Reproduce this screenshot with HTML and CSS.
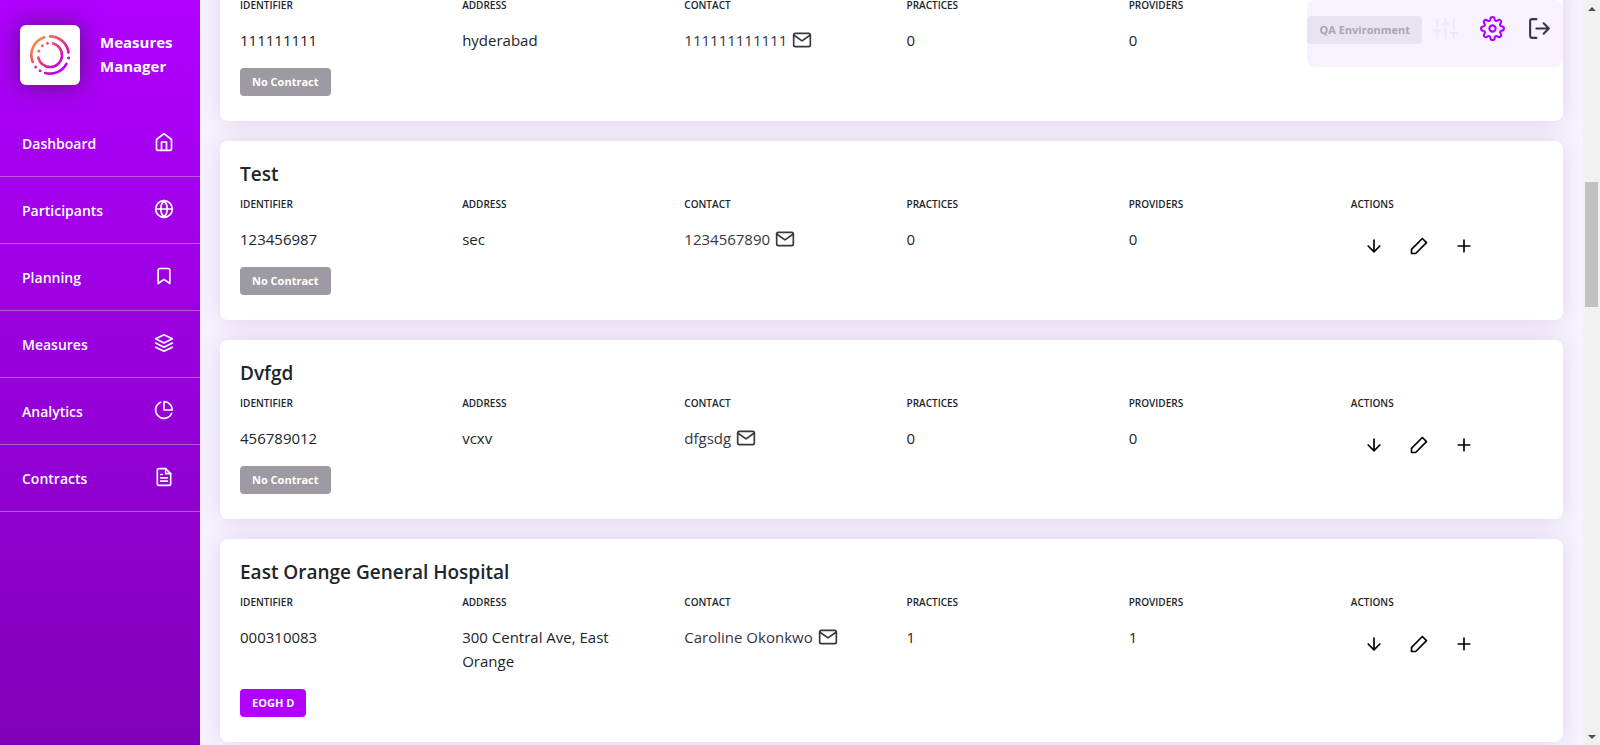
FILE: index.html
```html
<!DOCTYPE html>
<html lang="en">
<head>
<meta charset="utf-8">
<title>Measures Manager</title>
<link rel="stylesheet" href="styles.css">
</head>
<body>
<svg class="sprite" aria-hidden="true">
  <symbol id="mail" viewBox="0 0 24 24"><path d="M4 4h16c1.100 0 2 .9 2 2v12c0 1.100-.9 2-2 2H4c-1.100 0-2-.9-2-2V6c0-1.100.9-2 2-2z"/><path d="M22 6l-10 7L2 6"/></symbol>
  <symbol id="down" viewBox="0 0 24 24"><path d="M12 5v14M19 12l-7 7-7-7"/></symbol>
  <symbol id="edit" viewBox="0 0 24 24"><path d="M16 3l5 5L8 21H3v-5L16 3z"/></symbol>
  <symbol id="plus" viewBox="0 0 24 24"><path d="M12 5v14M5 12h14"/></symbol>
</svg>
<div class="app">
  <aside class="sidebar">
    <div class="brand">
      <span class="logo">
        <svg viewBox="-20 -20 40 40" width="40" height="40" aria-hidden="true">
          <defs><linearGradient id="brandFill" gradientUnits="userSpaceOnUse" x1="-16" y1="-14" x2="12" y2="16"><stop offset="0" stop-color="#f7943a"/><stop offset=".33" stop-color="#ee5468"/><stop offset=".65" stop-color="#d71ba8"/><stop offset="1" stop-color="#b000ff"/></linearGradient></defs>
          <g fill="none" stroke="url(#brandFill)" stroke-width="2.600" stroke-linecap="round">
            <path d="M-5.700-17.700A18.600 18.600 0 0 0-17.300 7"/>
            <path d="M0-18.600A18.600 18.600 0 0 1 18.500-2.500"/>
            <path d="M-4.800 18A18.600 18.600 0 0 0 16.400 8.900"/>
            <path d="M3-11.600A12 12 0 1 1-11.700 2.500"/>
          </g>
          <g fill="url(#brandFill)"><circle cx="18.600" cy="3" r="1.500"/><circle cx="-14.300" cy="12" r="1.500"/><circle cx="-9.900" cy="15.700" r="1.500"/><circle cx="-2.600" cy="-11.700" r="1.500"/><circle cx="-7.700" cy="-9.200" r="1.500"/><circle cx="-11.200" cy="-4" r="1.500"/></g>
        </svg>
      </span>
      <span class="brand-name">Measures Manager</span>
    </div>
    <nav class="nav" aria-label="Main">
      <a href="#dashboard">Dashboard<svg class="icon" viewBox="0 0 24 24"><path d="M3 9l9-7 9 7v11a2 2 0 0 1-2 2H5a2 2 0 0 1-2-2z"/><path d="M9 22V12h6v10"/></svg></a>
      <a href="#participants">Participants<svg class="icon" viewBox="0 0 24 24"><circle cx="12" cy="12" r="10"/><path d="M2 12h20M12 2a15.300 15.300 0 0 1 4 10 15.300 15.300 0 0 1-4 10 15.300 15.300 0 0 1-4-10 15.300 15.300 0 0 1 4-10z"/></svg></a>
      <a href="#planning">Planning<svg class="icon" viewBox="0 0 24 24"><path d="M19 21l-7-5-7 5V5a2 2 0 0 1 2-2h10a2 2 0 0 1 2 2z"/></svg></a>
      <a href="#measures">Measures<svg class="icon" viewBox="0 0 24 24"><path d="M12 2L2 7l10 5 10-5-10-5zM2 17l10 5 10-5M2 12l10 5 10-5"/></svg></a>
      <a href="#analytics">Analytics<svg class="icon" viewBox="0 0 24 24"><path d="M21.210 15.890A10 10 0 1 1 8 2.830"/><path d="M22 12A10 10 0 0 0 12 2v10z"/></svg></a>
      <a href="#contracts">Contracts<svg class="icon" viewBox="0 0 24 24"><path d="M14 2H6a2 2 0 0 0-2 2v16a2 2 0 0 0 2 2h12a2 2 0 0 0 2-2V8z"/><path d="M14 2v6h6M16 13H8M16 17H8M10 9H8"/></svg></a>
    </nav>
  </aside>

  <main class="content">
    <div class="cards">
      <article class="card">
        <div class="fields">
          <dl><dt>Identifier</dt><dd>111111111</dd></dl>
          <dl><dt>Address</dt><dd>hyderabad</dd></dl>
          <dl><dt>Contact</dt><dd class="contact">111111111111 <button type="button" aria-label="Send mail"><svg class="icon"><use href="#mail"/></svg></button></dd></dl>
          <dl><dt>Practices</dt><dd>0</dd></dl>
          <dl><dt>Providers</dt><dd>0</dd></dl>
        </div>
        <span class="tag">No Contract</span>
      </article>

      <article class="card">
        <h2>Test</h2>
        <div class="fields">
          <dl><dt>Identifier</dt><dd>123456987</dd></dl>
          <dl><dt>Address</dt><dd>sec</dd></dl>
          <dl><dt>Contact</dt><dd class="contact">1234567890 <button type="button" aria-label="Send mail"><svg class="icon"><use href="#mail"/></svg></button></dd></dl>
          <dl><dt>Practices</dt><dd>0</dd></dl>
          <dl><dt>Providers</dt><dd>0</dd></dl>
          <dl><dt>Actions</dt><dd class="actions"><button type="button" aria-label="Expand"><svg class="icon"><use href="#down"/></svg></button><button type="button" aria-label="Edit"><svg class="icon"><use href="#edit"/></svg></button><button type="button" aria-label="Add"><svg class="icon"><use href="#plus"/></svg></button></dd></dl>
        </div>
        <span class="tag">No Contract</span>
      </article>

      <article class="card">
        <h2>Dvfgd</h2>
        <div class="fields">
          <dl><dt>Identifier</dt><dd>456789012</dd></dl>
          <dl><dt>Address</dt><dd>vcxv</dd></dl>
          <dl><dt>Contact</dt><dd class="contact">dfgsdg <button type="button" aria-label="Send mail"><svg class="icon"><use href="#mail"/></svg></button></dd></dl>
          <dl><dt>Practices</dt><dd>0</dd></dl>
          <dl><dt>Providers</dt><dd>0</dd></dl>
          <dl><dt>Actions</dt><dd class="actions"><button type="button" aria-label="Expand"><svg class="icon"><use href="#down"/></svg></button><button type="button" aria-label="Edit"><svg class="icon"><use href="#edit"/></svg></button><button type="button" aria-label="Add"><svg class="icon"><use href="#plus"/></svg></button></dd></dl>
        </div>
        <span class="tag">No Contract</span>
      </article>

      <article class="card">
        <h2>East Orange General Hospital</h2>
        <div class="fields">
          <dl><dt>Identifier</dt><dd>000310083</dd></dl>
          <dl><dt>Address</dt><dd>300 Central Ave, East Orange</dd></dl>
          <dl><dt>Contact</dt><dd class="contact">Caroline Okonkwo <button type="button" aria-label="Send mail"><svg class="icon"><use href="#mail"/></svg></button></dd></dl>
          <dl><dt>Practices</dt><dd>1</dd></dl>
          <dl><dt>Providers</dt><dd>1</dd></dl>
          <dl><dt>Actions</dt><dd class="actions"><button type="button" aria-label="Expand"><svg class="icon"><use href="#down"/></svg></button><button type="button" aria-label="Edit"><svg class="icon"><use href="#edit"/></svg></button><button type="button" aria-label="Add"><svg class="icon"><use href="#plus"/></svg></button></dd></dl>
        </div>
        <span class="tag tag-active">EOGH D</span>
      </article>
    </div>

    <div class="toolbar">
      <span class="tag tag-env">QA Environment</span>
      <button type="button" class="filters" aria-label="Filters"><svg class="icon" viewBox="0 0 24 24"><path d="M4 21v-7M4 10V3M12 21v-9M12 8V3M20 21v-5M20 12V3M1 14h6M9 8h6M17 16h6"/></svg></button>
      <button type="button" class="settings" aria-label="Settings"><svg class="icon" viewBox="0 0 24 24"><circle cx="12" cy="12" r="3"/><path d="M19.400 15a1.650 1.650 0 0 0 .33 1.820l.06.06a2 2 0 0 1 0 2.830 2 2 0 0 1-2.830 0l-.06-.06a1.650 1.650 0 0 0-1.820-.33 1.650 1.650 0 0 0-1 1.510V21a2 2 0 0 1-2 2 2 2 0 0 1-2-2v-.09A1.650 1.650 0 0 0 9 19.400a1.650 1.650 0 0 0-1.820.33l-.06.06a2 2 0 0 1-2.830 0 2 2 0 0 1 0-2.830l.06-.06a1.650 1.650 0 0 0 .33-1.820 1.650 1.650 0 0 0-1.510-1H3a2 2 0 0 1-2-2 2 2 0 0 1 2-2h.09A1.650 1.650 0 0 0 4.600 9a1.650 1.650 0 0 0-.33-1.820l-.06-.06a2 2 0 0 1 0-2.830 2 2 0 0 1 2.830 0l.06.06a1.650 1.650 0 0 0 1.820.33H9a1.650 1.650 0 0 0 1-1.510V3a2 2 0 0 1 2-2 2 2 0 0 1 2 2v.09a1.650 1.650 0 0 0 1 1.510 1.650 1.650 0 0 0 1.820-.33l.06-.06a2 2 0 0 1 2.830 0 2 2 0 0 1 0 2.830l-.06.06a1.650 1.650 0 0 0-.33 1.820V9a1.650 1.650 0 0 0 1.510 1H21a2 2 0 0 1 2 2 2 2 0 0 1-2 2h-.09a1.650 1.650 0 0 0-1.510 1z"/></svg></button>
      <button type="button" class="logout" aria-label="Log out"><svg class="icon" viewBox="0 0 24 24"><path d="M9 21H5a2 2 0 0 1-2-2V5a2 2 0 0 1 2-2h4M16 17l5-5-5-5M21 12H9"/></svg></button>
    </div>
  </main>

  <div class="scrollbar" aria-hidden="true">
    <span class="arrow arrow-up"></span>
    <span class="thumb"></span>
    <span class="arrow arrow-down"></span>
  </div>
</div>
</body>
</html>
```

FILE: styles.css
```css
* { box-sizing: border-box; }
body {
  margin: 0;
  background: #f8f2ff;
  color: #212529;
  font: 400 15px/24px "Open Sans", "Noto Sans", sans-serif;
}
button {
  display: inline-flex;
  padding: 0;
  border: 0;
  background: none;
  color: inherit;
  cursor: pointer;
}
.sprite { position: absolute; width: 0; height: 0; }
.icon {
  width: 20px;
  height: 20px;
  flex: none;
  fill: none;
  stroke: currentColor;
  stroke-width: 2;
  stroke-linecap: round;
  stroke-linejoin: round;
}
.app { display: flex; height: 100vh; overflow: hidden; }

/* Sidebar */
.sidebar {
  flex: none;
  width: 200px;
  padding-top: 25px;
  background: linear-gradient(#b000ff, #8000b8);
  color: #fff;
}
.brand { display: flex; align-items: center; gap: 20px; padding: 0 20px; }
.logo {
  display: grid;
  place-items: center;
  flex: none;
  width: 60px;
  height: 60px;
  border-radius: 6px;
  background: #fff;
  box-shadow: 0 0 24px rgba(33, 37, 41, .6);
}
.brand-name { padding-bottom: 2px; font-weight: 700; }
.nav { display: flex; flex-direction: column; padding-top: 25px; }
.nav a {
  display: flex;
  align-items: center;
  justify-content: space-between;
  height: 67px;
  padding: 2px 26px 0 22px;
  border-bottom: 1px solid rgba(200, 180, 210, .5);
  color: inherit;
  font-size: 14px;
  font-weight: 600;
  text-decoration: none;
}
.nav .icon { margin-bottom: 4px; }

/* Cards */
.content { position: relative; flex: 1; min-width: 0; padding: 0 20px; overflow: hidden; }
.cards { display: flex; flex-direction: column; gap: 20px; margin-top: -21px; }
.card {
  padding: 20px 20px 25px;
  border-radius: 8px;
  background: #fff;
  box-shadow: 0 0 25px rgba(50, 20, 90, .12);
}
.card h2 {
  margin: 0 0 11px;
  font-size: 19px;
  font-weight: 600;
  line-height: 26px;
}
.fields {
  display: grid;
  grid-template-columns: repeat(6, minmax(0, 1fr));
  gap: 30px;
  margin-bottom: 16px;
}
dl { margin: 0; }
dt {
  margin-bottom: 17px;
  font-size: 10px;
  font-weight: 600;
  line-height: 12px;
  text-transform: uppercase;
}
dd { margin: 0; }
.contact { display: flex; align-items: center; gap: 5px; color: #3a3541; }
.actions { display: flex; gap: 25px; height: 24px; padding: 9px 0 0 13px; color: #000; }
.tag {
  display: block;
  width: fit-content;
  padding: 0 12px;
  border-radius: 4px;
  background: #9e9aa3;
  color: #fff;
  font-size: 11px;
  font-weight: 700;
  line-height: 28px;
}
.tag-active { background: #b000ff; }

/* Toolbar floating over the cards */
.toolbar {
  position: absolute;
  top: 0;
  right: 20px;
  display: flex;
  align-items: flex-start;
  height: 67px;
  padding: 16px 11px 0 0;
  border-radius: 8px;
  background: #f8f2ff;
}
.toolbar .icon { width: 25px; height: 25px; }
.tag-env { background: #e9e2ef; color: #aaa4b2; }
.filters { margin-left: 11px; color: #eee7f5; }
.settings { margin-left: 22px; color: #b000ff; }
.logout { margin-left: 22px; color: #3a3541; }

/* Scrollbar */
.scrollbar {
  display: grid;
  grid-template-rows: 17px 1fr 17px;
  justify-items: center;
  flex: none;
  width: 17px;
  background: #f1f1f1;
}
.thumb { width: 13px; height: 125px; margin-top: 165px; background: #c1c1c1; }
.arrow { align-self: center; border: 4px solid transparent; }
.arrow-up { border-top: 0; border-bottom-color: #505050; }
.arrow-down { border-bottom: 0; border-top-color: #505050; }
```
